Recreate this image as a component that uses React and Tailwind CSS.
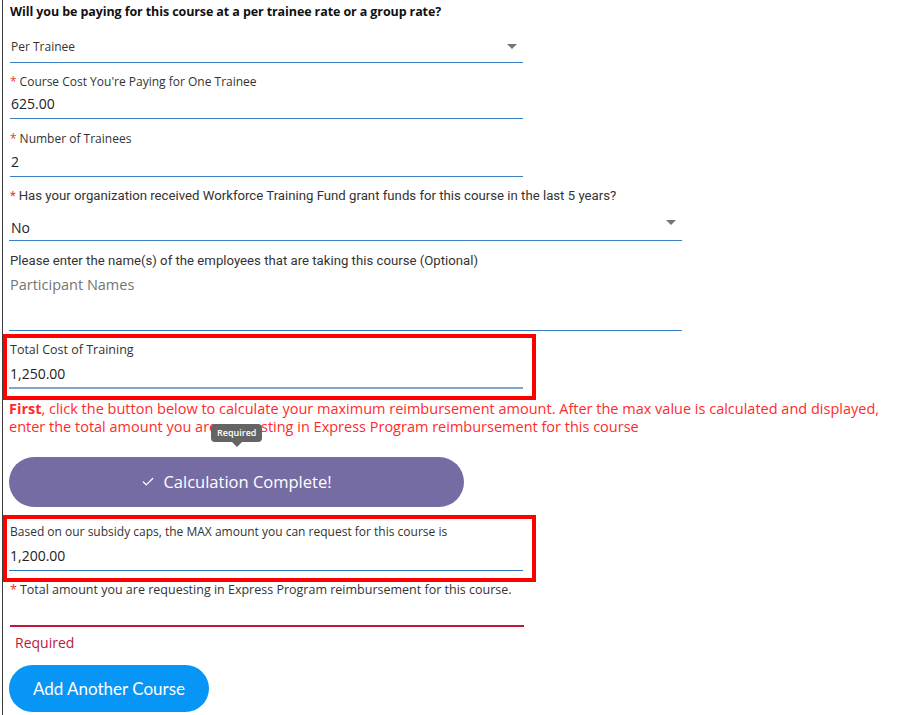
import React from "react";

function Caret() {
  return (
    <svg width="10" height="6" viewBox="0 0 10 6" className="shrink-0">
      <path d="M0 0 L10 0 L5 5 Z" fill="#757575" />
    </svg>
  );
}

function Star() {
  return <span className="text-[#e53935] mr-[3px]">*</span>;
}

export default function App() {
  return (
    <div className="w-[918px] h-[715px] overflow-hidden bg-white font-['Open_Sans',sans-serif]">
      <div className="ml-[2px] h-[715px] border-l border-[#3c3c3c] flex flex-col text-[#222]">
        {/* Heading */}
        <div className="pl-[7px] h-[24px] leading-[24px] text-[12.5px] font-bold text-[#111] tracking-[-0.1px]">
          Will you be paying for this course at a per trainee rate or a group rate?
        </div>

        {/* Select 1 */}
        <div className="ml-[7px] w-[513px] mt-[13px] pb-[5px] border-b border-[#3b7fc0] flex items-center justify-between pr-[6px] leading-[20px]">
          <div className="pl-[1px] text-[12px] text-[#333]">Per Trainee</div>
          <Caret />
        </div>

        {/* Course Cost */}
        <div className="pl-[7px] mt-[10px] leading-[18px] text-[12px] text-[#333]">
          <Star />Course Cost You're Paying for One Trainee
        </div>
        <div className="ml-[7px] w-[513px] mt-[3px] pb-[4px] border-b border-[#3b7fc0] leading-[20px] text-[14px] text-[#222]">
          <div className="pl-[1px]">625.00</div>
        </div>

        {/* Number of trainees */}
        <div className="pl-[7px] mt-[11px] leading-[18px] text-[12px] text-[#333]">
          <Star />Number of Trainees
        </div>
        <div className="ml-[7px] w-[513px] mt-[4px] pb-[4px] border-b border-[#3b7fc0] leading-[20px] text-[14px] text-[#222]">
          <div className="pl-[1px]">2</div>
        </div>

        {/* WTF grant */}
        <div className="pl-[7px] mt-[10px] leading-[18px] text-[13.2px] text-[#333] font-['Roboto',sans-serif]">
          <Star />Has your organization received Workforce Training Fund grant funds for this course in the last 5 years?
        </div>
        <div className="ml-[6px] w-[673px] mt-[12px] pb-[2px] border-b border-[#3b7fc0] flex items-start justify-between pr-[6px] leading-[20px]">
          <div className="pl-[2px] mt-[1px] text-[14px] text-[#222]">No</div>
          <div className="mt-[3px]"><Caret /></div>
        </div>

        {/* Participant names */}
        <div className="pl-[7px] mt-[11px] leading-[18px] text-[13.2px] text-[#333] font-['Roboto',sans-serif]">
          Please enter the name(s) of the employees that are taking this course (Optional)
        </div>
        <div className="ml-[6px] w-[673px] mt-[5px] pb-[35px] border-b border-[#3b7fc0] leading-[20px] text-[14.5px] text-[#757575]">
          <div className="pl-[1px]">Participant Names</div>
        </div>

        {/* Red box 1 */}
        <div className="mt-[3px] w-[533px] h-[66px] shrink-0 border-4 border-[#ff0000] pl-[2px]">
          <div className="pl-[1px] mt-[3px] leading-[18px] text-[12.5px] text-[#333]">
            Total Cost of Training
          </div>
          <div className="w-[514px] mt-[5px] pb-[3px] border-b-2 border-[#78a6cc] leading-[20px] text-[14px] text-[#222]">
            <div className="pl-[1px]">1,250.00</div>
          </div>
        </div>

        {/* Red instruction */}
        <div className="relative pl-[6px] text-[14.5px] leading-[18px] text-[#ff2b2b]">
          <p>
            <span className="font-bold">First</span>, click the button below to calculate your maximum reimbursement amount. After the max value is calculated and displayed,
          </p>
          <p>enter the total amount you are requesting in Express Program reimbursement for this course</p>
          <div className="absolute left-[208px] top-[24px] flex flex-col items-center">
            <div className="h-[18px] px-[6px] rounded-[4px] bg-[#646464] text-white text-[9px] font-semibold leading-[18px]">
              Required
            </div>
            <div className="w-0 h-0 border-l-[5px] border-r-[5px] border-t-[5px] border-l-transparent border-r-transparent border-t-[#646464]" />
          </div>
        </div>

        {/* Calculation button */}
        <div className="ml-[6px] mt-[21px] w-[455px] h-[50px] shrink-0 rounded-full bg-[#766ca4] flex items-center justify-center gap-[8px] text-white text-[16.5px]">
          <svg width="14" height="14" viewBox="0 0 24 24" fill="none" stroke="white" strokeWidth="2.2" strokeLinecap="round" strokeLinejoin="round">
            <path d="M20 6 9 17l-5-5" />
          </svg>
          <span className="font-medium">Calculation Complete!</span>
        </div>

        {/* Red box 2 */}
        <div className="mt-[8px] w-[533px] h-[67px] shrink-0 border-4 border-[#ff0000] pl-[2px]">
          <div className="pl-[1px] mt-[4px] leading-[18px] text-[12px] text-[#333]">
            Based on our subsidy caps, the MAX amount you can request for this course is
          </div>
          <div className="w-[514px] mt-[5px] pb-[4px] border-b border-[#2d74bb] leading-[20px] text-[14px] text-[#222]">
            <div className="pl-[1px]">1,200.00</div>
          </div>
        </div>

        {/* Total amount requesting */}
        <div className="pl-[7px] mt-[0px] leading-[16px] text-[12.5px] text-[#333]">
          <Star />Total amount you are requesting in Express Program reimbursement for this course.
        </div>
        <div className="ml-[7px] w-[514px] h-[29px] shrink-0 border-b-2 border-[#c0183a]" />
        <div className="pl-[12px] mt-[7px] leading-[18px] text-[14px] text-[#c0183a]">Required</div>

        {/* Add another course */}
        <div className="ml-[6px] mt-[13px] w-[200px] h-[47px] shrink-0 rounded-full bg-[#0795f6] flex items-center justify-center text-white text-[17px] font-['Lato',sans-serif]">
          Add Another Course
        </div>
      </div>
    </div>
  );
}
